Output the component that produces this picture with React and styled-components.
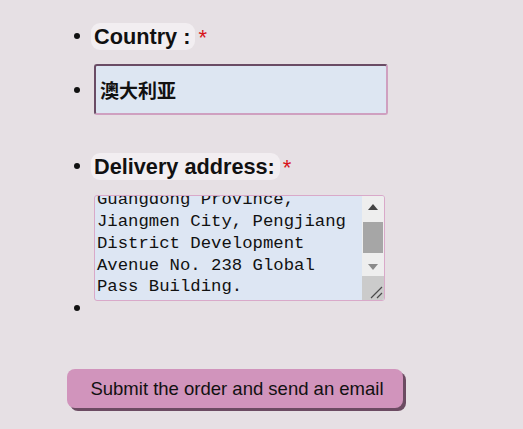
import React, { useLayoutEffect, useRef } from 'react'
import styled, { createGlobalStyle } from 'styled-components'

const address =
  "China (Mainland),\nPostal code 529000,\nGuangdong Province, Jiangmen City, Pengjiang District Development Avenue No. 238 Global Pass Building."

export default function App() {
  const areaRef = useRef(null)

  useLayoutEffect(() => {
    // the reference shows the textarea scrolled to its end
    const el = areaRef.current
    if (el) el.scrollTop = el.scrollHeight
  }, [])

  return (
    <>
      <GlobalStyle />
      <Form onSubmit={(e) => e.preventDefault()}>
        <List>
          <Item $h={28}>
            <Bullet />
            <Label>Country :</Label>
            <Star>*</Star>
          </Item>
          <Item $h={51} $gap={14}>
            <Bullet />
            <Input type="text" defaultValue="澳大利亚" />
          </Item>
          <Item $h={28} $gap={37}>
            <Bullet />
            <Label>Delivery address:</Label>
            <Star>*</Star>
          </Item>
          <AreaItem>
            <AreaBox>
              <Area ref={areaRef} defaultValue={address} />
              <ScrollBar>
                <Arrow $dir="up" />
                <Track>
                  <Thumb />
                </Track>
                <Arrow $dir="down" />
                <Grip>
                  <svg width="22" height="24" viewBox="0 0 22 24">
                    <path d="M9 22 L20 11 M15 22 L20 17" stroke="#4a4a4a" strokeWidth="1.2" />
                  </svg>
                </Grip>
              </ScrollBar>
            </AreaBox>
            <Bullet />
          </AreaItem>
        </List>
        <Submit type="submit">Submit the order and send an email</Submit>
      </Form>
    </>
  )
}

const GlobalStyle = createGlobalStyle`
  html, body {
    margin: 0;
    height: 100%;
    background: #e6e0e4;
  }
  body {
    font-family: 'Liberation Sans', Arial, sans-serif;
    color: #111;
  }
`

const Form = styled.form`
  padding: 22px 0 0 67px;
  display: flex;
  flex-direction: column;
  align-items: flex-start;
`

const List = styled.ul`
  list-style: none;
  margin: 0;
  padding: 0 0 0 7px;
  display: flex;
  flex-direction: column;
`

const Item = styled.li`
  display: flex;
  align-items: center;
  height: ${(p) => p.$h}px;
  margin-top: ${(p) => p.$gap || 0}px;
`

const AreaItem = styled.li`
  display: grid;
  grid-template-columns: 20px auto;
  grid-template-rows: auto auto;
  margin-top: 15px;

  & > div {
    grid-column: 2;
    grid-row: 1;
  }
  & > span {
    grid-column: 1;
    grid-row: 2;
    margin-top: 4px;
  }
`

const Bullet = styled.span`
  flex: none;
  width: 6px;
  height: 6px;
  border-radius: 50%;
  background: #111;
  margin-right: 14px;
`

const Label = styled.span`
  margin-left: -3px;
  background: #f2eef1;
  border-radius: 9px;
  padding: 0 5px 0 3px;
  line-height: 27px;
  font-size: 21.7px;
  font-weight: bold;
  color: #111;
`

const Star = styled.span`
  color: #d8141a;
  font-size: 22px;
  margin-left: 3px;
  margin-top: 4px;
`

const Input = styled.input`
  box-sizing: border-box;
  width: 294px;
  height: 51px;
  padding: 0 4px;
  background: #dde6f2;
  border: 2px solid;
  border-color: #6a4c65 #cfa0c0 #cfa0c0 #6a4c65;
  border-radius: 3px;
  font-family: 'Noto Sans CJK SC', sans-serif;
  font-weight: bold;
  font-size: 19px;
  color: #111;
  outline: none;
`

const AreaBox = styled.div`
  box-sizing: border-box;
  display: flex;
  width: 291px;
  height: 106px;
  background: #dde6f3;
  border: 1px solid #d9a9c9;
  border-radius: 3px;
  overflow: hidden;
`

const Area = styled.textarea`
  flex: 1;
  min-width: 0;
  box-sizing: border-box;
  height: 100%;
  margin: 0;
  padding: 2px;
  background: transparent;
  border: none;
  font-family: 'Liberation Mono', monospace;
  font-size: 17.3px;
  line-height: 21.7px;
  color: #111;
  outline: none;
  resize: none;
  overflow: hidden;
`

const ScrollBar = styled.div`
  flex: none;
  width: 22px;
  display: flex;
  flex-direction: column;
  background: #eeeeee;
`

const Arrow = styled.div`
  height: 18px;
  display: flex;
  align-items: center;
  justify-content: center;

  &::after {
    content: '';
    border-left: 5px solid transparent;
    border-right: 5px solid transparent;
    ${(p) =>
      p.$dir === 'up'
        ? 'border-bottom: 6px solid #444; margin-top: 4px;'
        : 'border-top: 6px solid #8a8a8a;'}
  }
`

const Track = styled.div`
  height: 44px;
`

const Thumb = styled.div`
  margin: 8px 1px 0 1px;
  height: 31px;
  background: #a6a6a6;
`

const Grip = styled.div`
  flex: 1;
  background: #cbcbcb;
  display: flex;
  align-items: flex-end;
`

const Submit = styled.button`
  margin-top: 58px;
  width: 336px;
  height: 39px;
  padding: 0 0 0 4px;
  background: #d194bc;
  border: none;
  border-radius: 8px;
  box-shadow: 3px 3px 0 #6c4b62;
  font-family: 'Liberation Sans', Arial, sans-serif;
  font-size: 18.5px;
  color: #111;
  cursor: pointer;
`
